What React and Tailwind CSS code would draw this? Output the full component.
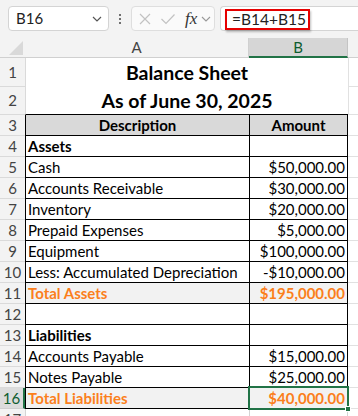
import React from "react";

const F = { fontFamily: "Lato, 'Open Sans', sans-serif" };

function Row({ n, a, b, kind = "normal", selected = false }) {
  const bg =
    kind === "head"
      ? "bg-[#d9d9d9]"
      : kind === "total"
      ? "bg-[#f2f2f2]"
      : "bg-white";
  const txt =
    kind === "total"
      ? "text-[#fb7f1c] font-bold"
      : kind === "bold" || kind === "head"
      ? "text-black font-bold"
      : "text-black";
  return (
    <div className="flex h-[21px]">
      <div
        className={
          selected
            ? "w-[25px] shrink-0 flex items-center justify-center bg-[#dcdcdc] text-[#0e5c2f] border-b border-[#cfcfcf] border-r-2 border-r-[#217346] text-[15px]"
            : "w-[25px] shrink-0 flex items-center justify-center bg-[#f3f3f3] text-[#444] border-b border-[#dadada] text-[15px]"
        }
      >
        {n}
      </div>
      <div
        className={`w-[224px] shrink-0 flex items-center pt-[1px] border-l border-b border-black px-[2px] text-[15px] ${bg} ${txt} ${
          kind === "head" ? "justify-center" : ""
        }`}
      >
        {a}
      </div>
      <div
        className={`relative w-[99px] shrink-0 flex items-center pt-[1px] border-l border-r border-b border-black px-[2px] text-[15px] ${bg} ${txt} ${
          kind === "head" ? "justify-center" : "justify-end"
        }`}
      >
        {b}
        {selected && (
          <>
            <div className="absolute -inset-[2px] border-2 border-[#217346] pointer-events-none" />
            <div className="absolute right-[-4px] bottom-[-4px] w-[6px] h-[6px] bg-[#217346] border border-white" />
          </>
        )}
      </div>
      <div className="flex-1 border-b border-[#e1e1e1]" />
    </div>
  );
}

export default function App() {
  const rows = [
    { n: 3, a: "Description", b: "Amount", kind: "head" },
    { n: 4, a: "Assets", b: "", kind: "bold" },
    { n: 5, a: "Cash", b: "$50,000.00" },
    { n: 6, a: "Accounts Receivable", b: "$30,000.00" },
    { n: 7, a: "Inventory", b: "$20,000.00" },
    { n: 8, a: "Prepaid Expenses", b: "$5,000.00" },
    { n: 9, a: "Equipment", b: "$100,000.00" },
    { n: 10, a: "Less: Accumulated Depreciation", b: "-$10,000.00" },
    { n: 11, a: "Total Assets", b: "$195,000.00", kind: "total" },
    { n: 12, a: "", b: "" },
    { n: 13, a: "Liabilities", b: "", kind: "bold" },
    { n: 14, a: "Accounts Payable", b: "$15,000.00" },
    { n: 15, a: "Notes Payable", b: "$25,000.00" },
    { n: 16, a: "Total Liabilities", b: "$40,000.00", kind: "total", selected: true },
  ];
  return (
    <div className="w-[358px] h-[416px] overflow-hidden bg-white" style={F}>
      {/* toolbar */}
      <div className="h-[38px] bg-[#f3f3f3] flex items-start pt-[6px]">
        <div className="ml-[8px] w-[101px] h-[25px] bg-white border border-[#d4d4d4] rounded-[4px] flex items-center pl-[7px] pr-[6px] text-[15px] text-[#222]">
          <span className="flex-1">B16</span>
          <svg width="10" height="6" viewBox="0 0 10 6">
            <path d="M1 1 L5 5 L9 1" fill="none" stroke="#555" strokeWidth="1.2" />
          </svg>
        </div>
        <div className="w-[22px] h-[25px] flex flex-col items-center justify-center gap-[2px]">
          <div className="w-[2px] h-[2px] bg-[#444] rounded-full" />
          <div className="w-[2px] h-[2px] bg-[#444] rounded-full" />
          <div className="w-[2px] h-[2px] bg-[#444] rounded-full" />
        </div>
        <div className="w-[84px] h-[25px] bg-[#fafafa] border border-[#dedede] rounded-[4px] flex items-center pl-[6px]">
          <svg width="14" height="14" viewBox="0 0 14 14">
            <path d="M2 2 L12 12 M12 2 L2 12" stroke="#c2c2c2" strokeWidth="1.2" fill="none" />
          </svg>
          <svg width="16" height="14" viewBox="0 0 16 14" className="ml-[8px]">
            <path d="M1.5 7 L6 11.5 L14.5 2.5" stroke="#c2c2c2" strokeWidth="1.2" fill="none" />
          </svg>
          <span
            className="ml-[9px] text-[17px] italic text-[#333] leading-none"
            style={{ fontFamily: "'Liberation Serif', serif" }}
          >
            fx
          </span>
          <svg width="10" height="6" viewBox="0 0 10 6" className="ml-[4px]">
            <path d="M1 1 L5 5 L9 1" fill="none" stroke="#999" strokeWidth="1.1" />
          </svg>
        </div>
        <div className="ml-[5px] flex-1 h-[25px] bg-white border border-r-0 border-[#d4d4d4] rounded-l-[4px] relative">
          <div className="absolute left-[4px] top-[2px] w-[85px] h-[21px] border-2 border-[#e60000] shadow-[1px_2px_2px_rgba(0,0,0,0.25)] flex items-center pl-[5px] text-[15.5px] text-[#222]">
            =B14+B15
          </div>
        </div>
      </div>
      {/* column header */}
      <div className="flex h-[20px]">
        <div className="w-[25px] shrink-0 bg-[#f3f3f3] border-b border-[#d0d0d0] relative">
          <svg width="14" height="14" viewBox="0 0 14 14" className="absolute left-[9px] top-[3px]">
            <path d="M14 0 L14 14 L0 14 Z" fill="#d9d9d9" />
          </svg>
        </div>
        <div className="w-[224px] shrink-0 bg-[#f3f3f3] border-b border-r border-[#d0d0d0] flex items-center justify-center text-[15px] text-[#444]">
          A
        </div>
        <div className="w-[99px] shrink-0 bg-[#d6d6d6] border-b-2 border-b-[#217346] border-r border-r-[#c4c4c4] flex items-center justify-center text-[15px] text-[#0e5c2f]">
          B
        </div>
        <div className="flex-1 bg-[#f3f3f3] border-b border-[#d0d0d0]" />
      </div>
      {/* row 1 */}
      <div className="flex h-[29px]">
        <div className="w-[25px] shrink-0 flex items-center justify-center bg-[#f3f3f3] text-[#444] border-b border-[#dadada] text-[15px]">
          1
        </div>
        <div className="w-[323px] shrink-0 flex items-center justify-center border-l border-[#dadada] text-[19.5px] font-bold text-black">
          Balance Sheet
        </div>
        <div className="flex-1 border-l border-b border-[#e1e1e1]" />
      </div>
      {/* row 2 */}
      <div className="flex h-[28px]">
        <div className="w-[25px] shrink-0 flex items-center justify-center bg-[#f3f3f3] text-[#444] border-b border-[#dadada] text-[15px]">
          2
        </div>
        <div className="w-[323px] shrink-0 flex items-center justify-center border-l border-l-[#dadada] border-b border-b-black text-[19.5px] font-bold text-black">
          As of June 30, 2025
        </div>
        <div className="flex-1 border-l border-b border-[#e1e1e1]" />
      </div>
      {rows.map((r) => (
        <Row key={r.n} {...r} />
      ))}
      {/* row 17 */}
      <div className="flex h-[21px]">
        <div className="w-[25px] shrink-0 flex items-start justify-center bg-[#f3f3f3] text-[#444] border-b border-[#dadada] text-[15px] leading-[21px]">
          17
        </div>
        <div className="w-[224px] shrink-0 border-l border-b border-[#d4d4d4]" />
        <div className="w-[99px] shrink-0 border-l border-r border-b border-[#d4d4d4]" />
        <div className="flex-1 border-b border-[#e1e1e1]" />
      </div>
    </div>
  );
}
